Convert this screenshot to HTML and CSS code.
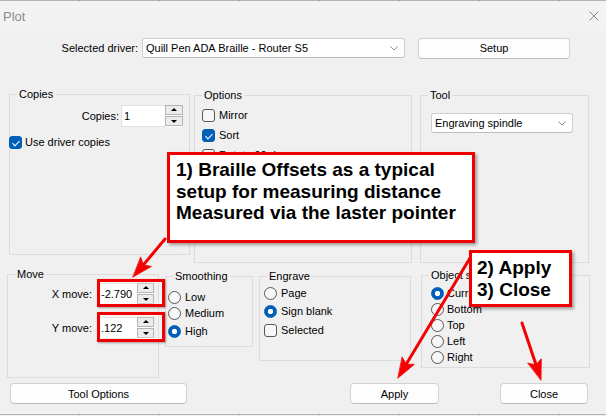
FILE: index.html
```html
<!DOCTYPE html>
<html lang="en">
<head>
<meta charset="utf-8">
<title>Plot</title>
<link rel="stylesheet" href="styles.css">
</head>
<body>
<div class="window">
  <div class="edge edge-top"></div>

  <div class="titlebar">
    <span class="title">Plot</span>
    <svg class="close-icon" viewBox="0 0 10 10" aria-hidden="true">
      <path d="M0.5 0.5 L9.5 9.5 M9.5 0.5 L0.5 9.5" stroke="#8a8a8a" stroke-width="1" fill="none"/>
    </svg>
  </div>

  <div class="driver-row">
    <span class="driver-label">Selected driver:</span>
    <div class="combo driver-combo">
      <span class="combo-text">Quill Pen ADA Braille - Router S5</span>
      <svg class="chevron" viewBox="0 0 8 5" aria-hidden="true"><polyline points="0.5,0.5 4,4 7.5,0.5" fill="none" stroke="#8a8a8a" stroke-width="1"/></svg>
    </div>
    <button class="btn setup-btn">Setup</button>
  </div>

  <div class="row row-top">
    <div class="group copies">
      <div class="group-title">Copies</div>
      <div class="field-row copies-row">
        <span class="field-label copies-label">Copies:</span>
        <div class="spin copies-spin">
          <span class="spin-field">1</span>
          <span class="spin-btns"><span class="spin-btn up"></span><span class="spin-btn down"></span></span>
        </div>
      </div>
      <div class="opt-row use-driver"><span class="cb on"></span><span class="opt-text">Use driver copies</span></div>
    </div>

    <div class="group options">
      <div class="group-title">Options</div>
      <div class="opt-list options-list">
        <div class="opt-row"><span class="cb"></span><span class="opt-text">Mirror</span></div>
        <div class="opt-row"><span class="cb on"></span><span class="opt-text">Sort</span></div>
        <div class="opt-row"><span class="cb"></span><span class="opt-text">Rotate 90 deg</span></div>
      </div>
    </div>

    <div class="group tool">
      <div class="group-title">Tool</div>
      <div class="combo tool-combo">
        <span class="combo-text">Engraving spindle</span>
        <svg class="chevron" viewBox="0 0 8 5" aria-hidden="true"><polyline points="0.5,0.5 4,4 7.5,0.5" fill="none" stroke="#8a8a8a" stroke-width="1"/></svg>
      </div>
    </div>
  </div>

  <div class="row row-mid">
    <div class="group move">
      <div class="group-title">Move</div>
      <div class="field-row move-x">
        <span class="field-label move-label">X move:</span>
        <div class="spin move-spin">
          <span class="spin-field">-2.790</span>
          <span class="spin-btns"><span class="spin-btn up"></span><span class="spin-btn down"></span></span>
        </div>
      </div>
      <div class="field-row move-y">
        <span class="field-label move-label">Y move:</span>
        <div class="spin move-spin">
          <span class="spin-field">.122</span>
          <span class="spin-btns"><span class="spin-btn up"></span><span class="spin-btn down"></span></span>
        </div>
      </div>
    </div>

    <div class="group smoothing">
      <div class="group-title">Smoothing</div>
      <div class="opt-list smoothing-list">
        <div class="opt-row s-low"><span class="rb"></span><span class="opt-text">Low</span></div>
        <div class="opt-row s-medium"><span class="rb"></span><span class="opt-text">Medium</span></div>
        <div class="opt-row s-high"><span class="rb on"></span><span class="opt-text">High</span></div>
      </div>
    </div>

    <div class="group engrave">
      <div class="group-title">Engrave</div>
      <div class="opt-list engrave-list">
        <div class="opt-row e-page"><span class="rb"></span><span class="opt-text">Page</span></div>
        <div class="opt-row e-blank"><span class="rb on"></span><span class="opt-text">Sign blank</span></div>
        <div class="opt-row e-selected"><span class="cb"></span><span class="opt-text">Selected</span></div>
      </div>
    </div>

    <div class="group object">
      <div class="group-title">Object start</div>
      <div class="opt-list object-list">
        <div class="opt-row"><span class="rb on"></span><span class="opt-text">Current</span></div>
        <div class="opt-row"><span class="rb"></span><span class="opt-text">Bottom</span></div>
        <div class="opt-row"><span class="rb"></span><span class="opt-text">Top</span></div>
        <div class="opt-row"><span class="rb"></span><span class="opt-text">Left</span></div>
        <div class="opt-row"><span class="rb"></span><span class="opt-text">Right</span></div>
      </div>
    </div>
  </div>

  <div class="row row-buttons">
    <button class="btn tool-options-btn">Tool Options</button>
    <button class="btn apply-btn">Apply</button>
    <button class="btn close-btn">Close</button>
  </div>

  <div class="edge edge-bottom"></div>

  <!-- annotation layer: arrows, highlight frames and callout notes -->
  <svg class="arrows" viewBox="0 0 606 416" aria-hidden="true">
    <g fill="#f40000" stroke="#f40000" stroke-linecap="round">
      <line x1="165" y1="239" x2="143.4" y2="264.9" stroke-width="3"/>
      <polygon points="133,277 151.4,266.4 143.4,264.9 140.8,257.3" stroke-width="0.8" stroke-linejoin="round"/>
      <line x1="470" y1="258" x2="406.2" y2="364.2" stroke-width="3"/>
      <polygon points="398,378 414.3,364.4 406.2,364.2 402.3,357.2" stroke-width="0.8" stroke-linejoin="round"/>
      <line x1="522" y1="323" x2="536" y2="364.8" stroke-width="3"/>
      <polygon points="541,380 541.3,358.8 536,364.8 528.1,363.2" stroke-width="0.8" stroke-linejoin="round"/>
    </g>
  </svg>

  <div class="mark mark-x"></div>
  <div class="mark mark-y"></div>

  <div class="callout callout-offsets">1) Braille Offsets as a typical<br>setup for measuring distance<br>Measured via the laster pointer</div>
  <div class="callout callout-steps">2) Apply<br>3) Close</div>
</div>
</body>
</html>
```

FILE: styles.css
```css
* {
  box-sizing: border-box;
}

html,
body {
  margin: 0;
  padding: 0;
}

body {
  width: 606px;
  height: 416px;
  overflow: hidden;
  background: #f0f0f0;
  font-family: "Liberation Sans", Arial, sans-serif;
  font-size: 11px;
  color: #000;
}

.window {
  position: relative;
  width: 606px;
  height: 416px;
  display: flex;
  flex-direction: column;
  background: #f0f0f0;
}

/* thin screen edges above and below the dialog */
.edge {
  flex: none;
  height: 1px;
  background-color: #b4b4b4;
  background-image: repeating-linear-gradient(90deg, transparent 0 79px, #8e8e8e 79px 80px);
}

.edge-bottom {
  margin-top: auto;
  margin-bottom: 1px;
}

/* title bar */
.titlebar {
  flex: none;
  height: 30px;
  display: flex;
  align-items: center;
  justify-content: space-between;
  padding: 0 7px 0 3px;
  background: #f3f3f3;
}

.title {
  font-size: 13px;
  color: #8c8c8c;
}

.close-icon {
  width: 10px;
  height: 10px;
}

/* driver selector */
.driver-row {
  flex: none;
  display: flex;
  align-items: center;
  height: 20px;
  margin-top: 7px;
}

.driver-label {
  width: 138px;
  text-align: right;
}

.combo {
  display: flex;
  align-items: center;
  justify-content: space-between;
  height: 20px;
  padding: 0 6px 0 3px;
  background: #fff;
  border: 1px solid #cfcfcf;
  border-bottom-color: #bdbdbd;
  border-radius: 3px;
}

.chevron {
  width: 8px;
  height: 5px;
}

.driver-combo {
  width: 263px;
  margin-left: 4px;
}

.btn {
  flex: none;
  height: 21px;
  padding: 0;
  font: inherit;
  color: #000;
  background: #fdfdfd;
  border: 1px solid #d2d2d2;
  border-bottom-color: #bcbcbc;
  border-radius: 4px;
}

.setup-btn {
  width: 152px;
  margin-left: 13px;
}

/* rows of group boxes */
.row {
  flex: none;
  display: flex;
  align-items: flex-start;
}

.row-top {
  margin-top: 36px;
}

.row-mid {
  margin-top: 11px;
}

.row-buttons {
  margin-top: 5px;
}

.group {
  flex: none;
  border: 1px solid #dcdcdc;
}

.group-title {
  width: fit-content;
  height: 13px;
  line-height: 13px;
  margin: -7px 0 0 7px;
  padding: 0 2px;
  background: #f0f0f0;
}

.copies {
  width: 181px;
  height: 161px;
  margin-left: 9px;
}

.options {
  width: 218px;
  height: 168px;
  margin: 1px 0 0 4px;
}

.tool {
  width: 169px;
  height: 168px;
  margin: 1px 0 0 8px;
}

.move {
  width: 152px;
  height: 104px;
  margin-left: 7px;
}

.smoothing {
  width: 88px;
  height: 71px;
  margin: 2px 0 0 6px;
}

.engrave {
  width: 152px;
  height: 85px;
  margin: 2px 0 0 6px;
}

.object {
  width: 169px;
  height: 93px;
  margin: 1px 0 0 10px;
}

/* labelled spin fields */
.field-row {
  display: flex;
  align-items: center;
}

.field-label {
  text-align: right;
}

.copies-row {
  margin-top: 4px;
}

.copies-label {
  width: 109px;
}

.copies-spin {
  margin-left: 2px;
}

.move-x {
  margin-top: 2px;
}

.move-y {
  margin-top: 12px;
}

.move-label {
  width: 84px;
}

.move-spin {
  margin-left: 7px;
}

.spin {
  display: flex;
  height: 22px;
}

.spin-field {
  display: flex;
  align-items: center;
  padding-left: 2px;
  background: #fff;
  border: 1px solid #e2e2e2;
  border-right: none;
}

.copies-spin .spin-field {
  width: 44px;
}

.move-spin .spin-field {
  width: 38px;
  padding-left: 1px;
}

.spin-btns {
  display: flex;
  flex-direction: column;
  justify-content: space-between;
  width: 18px;
  padding: 0 0 1px;
  background: #fff;
}

.move-spin .spin-btns {
  width: 17px;
}

.spin-btn {
  position: relative;
  height: 10px;
  background: #ececec;
  border: 1px solid #b4b4b4;
}

.spin-btn::before {
  content: "";
  position: absolute;
  left: 50%;
  top: 50%;
  margin: -2px 0 0 -3px;
  border-left: 3px solid transparent;
  border-right: 3px solid transparent;
}

.spin-btn.up::before {
  border-bottom: 3px solid #000;
}

.spin-btn.down::before {
  margin-top: -1px;
  border-top: 3px solid #000;
}

/* check boxes and radio buttons */
.opt-row {
  display: flex;
  align-items: center;
  height: 13px;
  line-height: 13px;
}

.opt-text {
  margin-left: 4px;
  white-space: nowrap;
}

.cb,
.rb {
  position: relative;
  flex: none;
  width: 13px;
  height: 13px;
  background: #f7f7f7;
  border: 1px solid #575757;
}

.cb {
  border-radius: 3px;
}

.cb.on {
  background: #005fb8;
  border-color: #005fb8;
}

.cb.on::after {
  content: "";
  position: absolute;
  left: 3.5px;
  top: 1.5px;
  width: 3px;
  height: 6px;
  border-right: 1.3px solid #fff;
  border-bottom: 1.3px solid #fff;
  transform: rotate(45deg);
}

.rb {
  border-radius: 50%;
}

.rb.on {
  border-color: #005fb8;
  background: radial-gradient(circle, #fff 0 2.4px, #005fb8 3px);
}

.use-driver {
  margin: 9px 0 0 -1px;
}

.use-driver .opt-text {
  margin-left: 3px;
}

.options-list {
  display: flex;
  flex-direction: column;
  gap: 7px;
  margin: 7px 0 0 7px;
}

.tool-combo {
  width: 142px;
  margin: 11px 0 0 10px;
}

.smoothing-list {
  margin: 8px 0 0 2px;
}

.s-medium {
  margin-top: 3px;
}

.s-high {
  margin-top: 5px;
}

.engrave-list {
  margin: 4px 0 0 4px;
}

.e-blank {
  margin-top: 5px;
}

.e-selected {
  margin-top: 6px;
}

.object-list {
  display: flex;
  flex-direction: column;
  gap: 3px;
  margin: 5px 0 0 9px;
}

.object-list .opt-text {
  margin-left: 3px;
}

/* bottom buttons */
.tool-options-btn {
  width: 177px;
  margin-left: 10px;
}

.apply-btn {
  width: 89px;
  margin-left: 163px;
}

.close-btn {
  width: 88px;
  margin-left: 61px;
}

/* annotation layer */
.arrows {
  position: absolute;
  left: 0;
  top: 0;
  width: 606px;
  height: 416px;
  pointer-events: none;
}

.mark {
  position: absolute;
  left: 97px;
  width: 68px;
  border: 3px solid #f00000;
  box-shadow: 1px 1px 2px rgba(0, 0, 0, 0.35), inset 0 0 4px rgba(255, 255, 255, 0.9);
}

.mark-x {
  top: 279px;
  height: 28px;
}

.mark-y {
  top: 312px;
  height: 30px;
}

.callout {
  position: absolute;
  background: #fff;
  border: 3px solid #f00000;
  box-shadow: 2px 2px 3px rgba(0, 0, 0, 0.35);
  font-family: "Liberation Sans", Arial, sans-serif;
  font-weight: bold;
  font-size: 19px;
  line-height: 21.5px;
  white-space: nowrap;
}

.callout-offsets {
  left: 167px;
  top: 152px;
  width: 308px;
  height: 91px;
  padding: 4px 0 0 6px;
}

.callout-steps {
  left: 469px;
  top: 250px;
  width: 103px;
  height: 57px;
  padding: 4px 0 0 5px;
}
```
